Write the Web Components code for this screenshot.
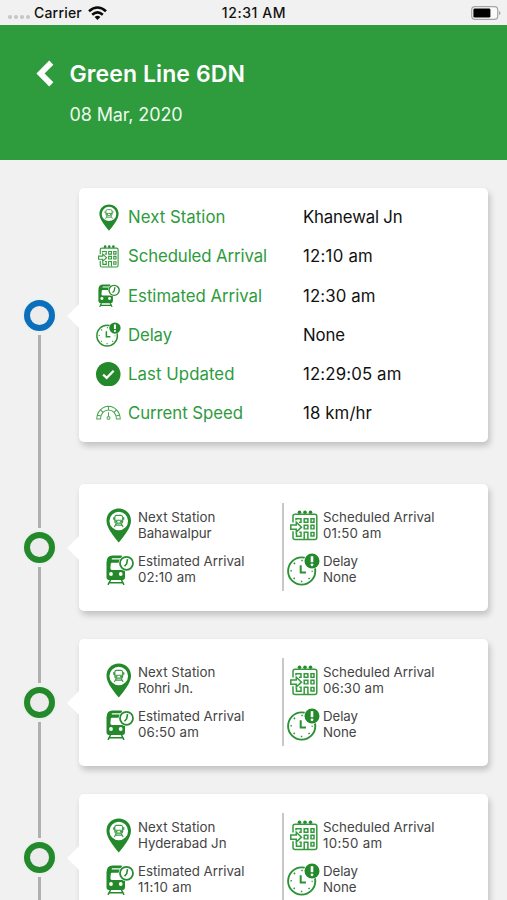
<!DOCTYPE html>
<html lang="en">
<head>
<meta charset="utf-8">
<title>Green Line 6DN</title>
<style>
html,body{margin:0;height:100%;overflow:hidden;background:#f1f1f1}
body{font-family:Inter,"Liberation Sans",sans-serif}
</style>
</head>
<body>
<train-screen></train-screen>
<script>
const define = (name, html, setup) => customElements.define(name, class extends HTMLElement {
  connectedCallback() {
    if (this.shadowRoot) return;
    const root = this.attachShadow({mode: 'open'});
    root.innerHTML = typeof html === 'function' ? html(this) : html;
    if (setup) setup(this, root);
  }
});

/* Text tracked to fill a given width */
define('fit-text', '<style>:host{display:inline-block;white-space:nowrap}</style><span><slot></slot></span>', (el, root) => {
  const span = root.querySelector('span');
  const spare = Number(el.getAttribute('w')) - span.getBoundingClientRect().width;
  const n = el.textContent.length;
  if (el.hasAttribute('w') && n > 1) span.style.letterSpacing = (spare / n).toFixed(3) + 'px';
});

const ICONS = {
  pin: ['0 0 26 36', `<path fill="#23892b" fill-rule="evenodd" d="M13 .5C5.900 .5.5 5.900.5 13c0 4 2 8 4.500 12 2.500 4 5.500 7.500 8 10.500 2.500-3 5.500-6.500 8-10.500 2.500-4 4.500-8 4.500-12C25.500 5.900 20.100.5 13 .5Zm0 3.300a9.500 9.500 0 1 1 0 19 9.500 9.500 0 0 1 0-19Z"/>
    <g fill="none" stroke="#3b9b43" stroke-width="1.200"><path d="M10.800 7.500h4.400q1.800 0 1.800 2v4.300q0 1.700-1.600 1.700h-4.800q-1.600 0-1.600-1.700V9.500q0-2 1.800-2ZM9 12.600h8M7.900 9.500v2.500M18.100 9.500v2.500M10.500 16l-2 3.600M15.500 16l2 3.600M10 17.600h6"/></g><path fill="#3b9b43" d="M9.600 13.200h2v1.600h-2zM14.400 13.200h2v1.600h-2z"/>`],
  calendar: ['0 0 28 32', `<g fill="none" stroke="#359a3d" stroke-width="1.500"><path d="M3 13V6.500Q3 4.300 5.200 4.300H24.800Q26.800 4.300 26.800 6.500V28.500Q26.800 30.500 24.800 30.500H5.200Q3 30.500 3 28.500V22"/>
    <path d="M6 10.500V9h5v3.700H9M14.200 9h3.700v3.700h-3.700zM21 9h3v3.700H21zM14.200 15.800h3.700v3.700h-3.700zM21 15.800h3v3.700H21zM6.500 23.500V27h4.500v-4H9.300M14.200 30V23h3.700v7M21 23.200h3v3.700H21z"/>
    <path d="M.8 15.500h5.500v-2.800l5.200 5-5.200 5v-2.900H.8Z"/></g><g fill="#248b2d"><circle cx="9.500" cy="2.300" r="1.800"/><circle cx="15" cy="2.300" r="1.800"/><circle cx="20.500" cy="2.300" r="1.800"/></g>`],
  train: ['0 0 28 30', `<path fill="#23892b" d="M6.500 .5H15.500L19 8V22Q19 25 16.500 25H3Q.5 25 .5 22V7.500Q.5 .5 6.500 .5Z"/>
    <path d="M6.500 3.300H15V4.600H5.700Q5.500 3.300 6.500 3.300ZM5.800 7.700H14L17 15H6Q4.300 15 4.400 13L4.800 8.800Q5 7.700 5.800 7.700Z" fill="#fff"/>
    <circle cx="5" cy="19" r="1.900" fill="#fff"/><circle cx="14.700" cy="19" r="1.900" fill="#fff"/>
    <path d="M4.500 25 2 29.800M15.500 25l2.500 4.800M2.300 27.800h15.400" stroke="#23892b" stroke-width="1.600" fill="none"/>
    <circle cx="20.500" cy="8.300" r="8" fill="#fff"/><circle cx="20.500" cy="8.300" r="6.500" fill="none" stroke="#278d30" stroke-width="1.800"/><path d="M21.500 4.200 20.700 8.700l-2.200 2.500" fill="none" stroke="#278d30" stroke-width="1.600"/>`],
  clock: ['0 0 33 33', `<circle cx="14.700" cy="18" r="13.600" fill="none" stroke="#2b9134" stroke-width="1.900"/><path d="M13.700 12.200v7.300h5.300" fill="none" stroke="#2b9134" stroke-width="2"/>
    <circle cx="14.700" cy="18" r="10.500" fill="none" stroke="#2b9134" stroke-width="1.500" stroke-dasharray="1.500 6.747" stroke-dashoffset=".75"/>
    <circle cx="25" cy="8" r="8" fill="#fff"/><circle cx="25" cy="8" r="7.500" fill="#23892b"/><path d="M25 3.200v6" stroke="#fff" stroke-width="2.600"/><circle cx="25" cy="11.800" r="1.400" fill="#fff"/>`],
  check: ['0 0 24 24', `<circle cx="12" cy="12" r="12" fill="#23892b"/><path d="M7 12.300 10.500 15.500 17.300 8.500" fill="none" stroke="#fff" stroke-width="2.200"/>`],
  gauge: ['0 0 26 16', `<g fill="none" stroke="#4aa551" stroke-width="1.100"><path d="M.8 14.500C1 7 6.500 1.300 13 1.300S25 7 25.200 14.500H21.300C21.300 9 17.800 5.200 13 5.200S4.700 9 4.700 14.500ZM13 1.500v3.500M4.800 5l2.500 2.700M21.200 5l-2.500 2.700M1.800 10.500l3.400.8M24.200 10.500l-3.400.8"/><path d="M13 7.500v4.300"/><circle cx="13" cy="13.300" r="1.500"/></g>`],
  back: ['0 0 18 27', `<path d="m15.300 2.600-10.800 10.900 10.800 10.900" fill="none" stroke="#fff" stroke-width="5.800"/>`],
  wifi: ['0 0 19 14', `<g fill="none" stroke="#0a0a0a" stroke-width="2.600"><path d="M1 5.300Q9.500-2.300 18 5.300M4.200 8.700q5.300-4.500 10.600 0"/></g><path d="M6.600 11q2.900-2.300 5.800 0L9.500 13.900Z" fill="#0a0a0a"/>`],
  battery: ['0 0 30 14', `<rect x=".7" y=".7" width="26" height="12.600" rx="3.300" fill="#fafafa" stroke="#a5a5a5" stroke-width="1.200"/><rect x="2.400" y="2.400" width="17" height="9.200" rx="1.400" fill="#000"/><path d="M28 4.700q3 2.300 0 4.600Z" fill="#a5a5a5"/>`]
};
define('line-icon', el => {
  const [box, art] = ICONS[el.getAttribute('name')];
  return `<style>:host{display:block;flex:none}svg{display:block}</style><svg width="${el.getAttribute('w')}" height="${el.getAttribute('h')}" viewBox="${box}" preserveAspectRatio="none">${art}</svg>`;
});

define('status-bar', `<style>
:host{display:grid;grid-template-columns:1fr auto 1fr;align-items:center;height:25px;background:#f1f1f1;color:#111;font-size:14px;font-weight:500;line-height:25px}
.l{display:flex;align-items:center;padding-left:8px}.dots{display:flex;gap:2px;margin:9px 4px 0 0}i{width:4px;height:4px;border-radius:50%;background:#c6c6c6}
.l line-icon{margin-left:6px}.r{justify-self:end;padding-right:6px}.t{padding-left:1px}
</style><div class="l"><div class="dots"><i></i><i></i><i></i><i></i></div><fit-text w="48">Carrier</fit-text><line-icon name="wifi" w="19" h="14"></line-icon></div><fit-text class="t" w="64.500">12:31 AM</fit-text><line-icon class="r" name="battery" w="30" h="14"></line-icon>`);

define('page-header', `<style>
:host{display:block;box-sizing:border-box;height:135px;background:#2e9b3d;color:#fff;padding:32px 0 0 36px}
.row{display:flex;align-items:center;height:33px}line-icon{margin-right:15.500px}
::slotted(.title){font-size:23px;font-weight:600;line-height:33px;padding-top:1px}
::slotted(.date){display:block;margin:12px 0 0 33.500px;font-size:18px;line-height:26px;color:#effaef}
</style><div class="row"><line-icon name="back" w="18" h="27"></line-icon><slot></slot></div><slot name="date"></slot>`);

define('timeline-item', `<style>
:host{display:grid;grid-template-columns:79px 409px;--up:58px;--pt:14px;--pb:14px;--ring:#23892b}
:host([current]){--up:136px;--pt:28px;--pb:21px;--ring:#0b6fbb;--top:transparent}
:host([second]){--up:65px;--pt:21px}
.rail{display:grid;grid-template-rows:var(--up) 39px 1fr;justify-items:center}
.line{width:3px;background:#b0b0b0}.line:first-child{background:var(--top,#b0b0b0)}
.dot{box-sizing:border-box;align-self:center;width:31px;height:31px;border:6px solid var(--ring);border-radius:50%;background:#ececec;box-shadow:0 0 0 2px #eaf1ec}
.wrap{padding:var(--pt) 0 var(--pb)}
.card{position:relative;background:#fff;border-radius:5px;box-shadow:2px 4px 6px #0003}
.card:before{content:"";position:absolute;left:-12px;top:calc(var(--up) + 19.500px - var(--pt) - 12px);border:12px solid transparent;border-left-width:0;border-right-color:#fff}
</style><div class="rail"><div class="line"></div><div class="dot"></div><div class="line"></div></div><div class="wrap"><div class="card"><slot></slot></div></div>`);

define('info-row', el => `<style>
:host{display:grid;grid-template-columns:49px 175px 1fr;height:39.120px;align-items:center;font-size:16.800px;line-height:24px}
.ic{width:25px;margin-left:17px;display:flex;justify-content:center}.k{color:#2e9b3d}.v{color:#111}
</style><div class="ic"><line-icon name="${el.getAttribute('icon')}" w="${el.getAttribute('iw')}" h="${el.getAttribute('ih')}"></line-icon></div><fit-text class="k" w="${el.getAttribute('kw')}">${el.getAttribute('key')}</fit-text><fit-text class="v" w="${el.getAttribute('vw')}">${el.getAttribute('value')}</fit-text>`);

define('stop-cell', el => `<style>
:host{display:grid;grid-template-columns:32px auto;height:44.250px;align-items:start;font-size:13.300px;line-height:16.200px;color:#444}
.ic{height:32.500px;display:flex;align-items:center}.t{display:flex;flex-direction:column;align-items:flex-start}
</style><div class="ic"><line-icon name="${el.getAttribute('icon')}" w="${el.getAttribute('iw')}" h="${el.getAttribute('ih')}"></line-icon></div><div class="t"><fit-text w="${el.getAttribute('kw')}">${el.getAttribute('key')}</fit-text><fit-text w="${el.getAttribute('vw')}">${el.getAttribute('value')}</fit-text></div>`);

define('stop-details', el => {
  const a = n => el.getAttribute(n);
  return `<style>
:host{display:grid;grid-template-columns:203px 1fr;box-sizing:border-box;height:127px;padding-top:19px}
.a{padding:6px 0 0 27px}.b{box-sizing:border-box;height:88px;border-left:2px solid #c8c8c8;padding-top:6px}
.a .est{margin-left:-.5px;grid-template-columns:32.500px auto}
.b stop-cell{padding-left:6px;grid-template-columns:33px auto}.b .late{padding-left:3px;grid-template-columns:36px auto}
</style><div class="a"><stop-cell icon="pin" iw="25.500" ih="35" key="Next Station" kw="77.500" value="${a('station')}" vw="${a('sw')}"></stop-cell><stop-cell class="est" icon="train" iw="28" ih="30" key="Estimated Arrival" kw="106.500" value="${a('est')}" vw="${a('ew')}"></stop-cell></div>
<div class="b"><stop-cell icon="calendar" iw="28" ih="31" key="Scheduled Arrival" kw="111.500" value="${a('sch')}" vw="${a('cw')}"></stop-cell><stop-cell class="late" icon="clock" iw="33" ih="33" key="Delay" kw="35" value="None" vw="33.500"></stop-cell></div>`;
});

define('train-screen', `<style>
:host{display:block;height:900px;overflow:hidden;background:#f1f1f1}
.main{box-sizing:border-box;height:254px;padding-top:9.800px}
</style><status-bar></status-bar>
<page-header><fit-text class="title" w="175.500">Green Line 6DN</fit-text><fit-text class="date" slot="date" w="113">08 Mar, 2020</fit-text></page-header>
<timeline-item current><div class="main">
<info-row icon="pin" iw="20" ih="27" key="Next Station" kw="97.500" value="Khanewal Jn" vw="99.500"></info-row>
<info-row icon="calendar" iw="21" ih="23" key="Scheduled Arrival" kw="139" value="12:10 am" vw="70"></info-row>
<info-row icon="train" iw="22" ih="23" key="Estimated Arrival" kw="134" value="12:30 am" vw="72.500"></info-row>
<info-row icon="clock" iw="25" ih="25" key="Delay" kw="44" value="None" vw="42"></info-row>
<info-row icon="check" iw="24.500" ih="24.500" key="Last Updated" kw="106.500" value="12:29:05 am" vw="98.500"></info-row>
<info-row icon="gauge" iw="25" ih="15.500" key="Current Speed" kw="115" value="18 km/hr" vw="69"></info-row>
</div></timeline-item>
<timeline-item second><stop-details station="Bahawalpur" sw="73.500" est="02:10 am" ew="58" sch="01:50 am" cw="58.500"></stop-details></timeline-item>
<timeline-item><stop-details station="Rohri Jn." sw="55" est="06:50 am" ew="61" sch="06:30 am" cw="61"></stop-details></timeline-item>
<timeline-item><stop-details station="Hyderabad Jn" sw="88.500" est="11:10 am" ew="54" sch="10:50 am" cw="59.500"></stop-details></timeline-item>`);
</script>
</body>
</html>
